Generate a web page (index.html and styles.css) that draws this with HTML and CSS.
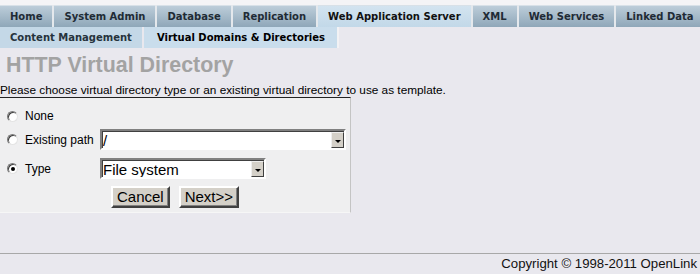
FILE: index.html
```html
<!DOCTYPE html>
<html>
<head>
    <title>HTTP Virtual Directory</title>
    <meta charset="UTF-8">
    <link rel="stylesheet" href="styles.css">
</head>
<body>
    <div class="top-strip"></div>
    <div class="tabs">
        <a class="tab">Home</a>
        <a class="tab">System Admin</a>
        <a class="tab">Database</a>
        <a class="tab">Replication</a>
        <a class="tab active">Web Application Server</a>
        <a class="tab">XML</a>
        <a class="tab">Web Services</a>
        <a class="tab">Linked Data</a>
    </div>
    <div class="subtabs">
        <a class="subtab">Content Management</a>
        <a class="subtab active">Virtual Domains &amp; Directories</a>
    </div>

    <h1 class="page-title">HTTP Virtual Directory</h1>
    <p class="intro">Please choose virtual directory type or an existing virtual directory to use as template.</p>

    <form class="vd-box">
        <div class="vd-row row-none">
            <label class="vd-label"><input type="radio" name="vdtype" class="radio"><span>None</span></label>
        </div>
        <div class="vd-row row-path">
            <label class="vd-label"><input type="radio" name="vdtype" class="radio"><span>Existing path</span></label>
            <div class="combo combo-path">
                <input type="text" class="combo-text" value="/">
                <span class="combo-btn"></span>
            </div>
        </div>
        <div class="vd-row row-type">
            <label class="vd-label"><input type="radio" name="vdtype" class="radio" checked><span>Type</span></label>
            <div class="combo combo-type">
                <select class="combo-text">
                    <option>File system</option>
                    <option>WebDAV</option>
                </select>
                <span class="combo-btn"></span>
            </div>
        </div>
        <div class="vd-buttons">
            <button type="button" class="btn">Cancel</button>
            <button type="button" class="btn">Next&gt;&gt;</button>
        </div>
    </form>

    <div class="footer">Copyright &copy; 1998-2011 OpenLink</div>
</body>
</html>
```

FILE: styles.css
```css
body {
    margin: 0;
    background: #e9e8ee;
    font-family: "Liberation Sans", Arial, sans-serif;
    color: #000;
}

.top-strip {
    height: 5px;
    background: #f4f4f6;
}

/* main tab row */
.tabs {
    display: flex;
    gap: 2px;
    height: 22px;
    overflow: hidden;
    background: #e4e8ec;
}
.tab {
    flex: none;
    padding: 0 10px;
    height: 22px;
    line-height: 22px;
    font-family: "DejaVu Sans", Verdana, sans-serif;
    font-weight: bold;
    font-size: 10px;
    color: #1f2b35;
    background: linear-gradient(#bccdd9, #8fa7b9);
    box-sizing: border-box;
    border-top: 1px solid #d8e1e8;
}
.tab.active {
    background: linear-gradient(#d3e4f0, #c2d8e8);
    color: #111;
}

/* sub tab row */
.subtabs {
    display: flex;
    gap: 2px;
    height: 21px;
}
.subtab {
    padding: 0 10px;
    line-height: 21px;
    font-family: "DejaVu Sans", Verdana, sans-serif;
    font-weight: bold;
    font-size: 10px;
    color: #26333d;
    background: #c4d8e7;
}
.subtab.active {
    padding: 0 12px 0 13px;
    color: #000;
    background: #c9ddec;
    border-right: 2px solid #f2f2f4;
}

.page-title {
    margin: 4px 0 0 6px;
    font-size: 21.4px;
    line-height: 26px;
    font-weight: bold;
    color: #a3a3a3;
}

.intro {
    margin: 6px 0 0 0;
    font-size: 11.8px;
    line-height: 13px;
}

/* the form box */
.vd-box {
    width: 350px;
    border-top: 1px solid #222;
    border-right: 1px solid #c4c4c4;
    border-bottom: 1px solid #f6f6f6;
    background: #efeff0;
    padding: 7px 0 4px 0;
    font-size: 12px;
}
.vd-row {
    display: flex;
    align-items: center;
    height: 21px;
}
.row-none { height: 22px; }
.row-path { margin-top: 2px; }
.row-type { margin-top: 8px; }

.vd-label {
    width: 100px;
    display: flex;
    align-items: center;
}
.radio {
    appearance: none;
    -webkit-appearance: none;
    width: 11px;
    height: 11px;
    margin: 0 7px 0 7px;
    border-radius: 50%;
    background: #fff;
    border: 1px solid;
    border-color: #7a7a7a #e4e4e4 #e4e4e4 #7a7a7a;
    box-shadow: inset 1px 1px 0 #404040;
    position: relative;
}
.radio:checked::after {
    content: "";
    position: absolute;
    left: 3px;
    top: 3px;
    width: 4px;
    height: 4px;
    border-radius: 50%;
    background: #000;
}

.combo {
    display: flex;
    height: 21px;
    box-sizing: border-box;
    border: 2px solid;
    border-color: #808080 #fff #fff #808080;
    box-shadow: inset 1px 1px 0 #404040;
    background: #fff;
}
.combo-path { width: 246px; }
.combo-type { width: 166px; }
.combo-text {
    flex: 1;
    min-width: 0;
    border: none;
    outline: none;
    background: transparent;
    appearance: none;
    -webkit-appearance: none;
    font-family: "Liberation Sans", Arial, sans-serif;
    font-size: 15px;
    padding: 0;
    margin: 1px 0 0 1px;
    color: #000;
}
.combo-btn {
    width: 13px;
    box-sizing: border-box;
    margin: 1px 0 0 0;
    background: #d4d0c8;
    border: 1px solid;
    border-color: #eee #404040 #404040 #eee;
    position: relative;
}
.combo-btn::after {
    content: "";
    position: absolute;
    left: 3px;
    top: 7px;
    border-left: 3px solid transparent;
    border-right: 3px solid transparent;
    border-top: 3px solid #000;
}

.vd-buttons {
    display: flex;
    justify-content: center;
    gap: 9px;
    margin-top: 7px;
}
.btn {
    height: 22px;
    padding: 0 4px;
    font-family: "Liberation Sans", Arial, sans-serif;
    font-size: 15px;
    color: #000;
    background: #d4d0c8;
    border: 2px solid;
    border-color: #fff #404040 #404040 #fff;
    box-shadow: inset -1px -1px 0 #808080;
    line-height: 16px;
}

.footer {
    margin-top: 40px;
    border-top: 1px solid #a8a8a8;
    padding: 2px 3px 0 0;
    text-align: right;
    font-size: 13.2px;
    line-height: 15px;
    color: #111;
}
```
